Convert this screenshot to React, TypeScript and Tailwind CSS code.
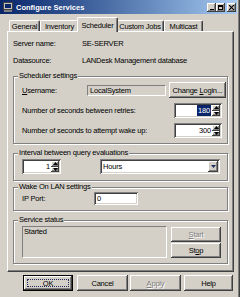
import React from "react";

const raised =
  "bg-[#d4d0c8] shadow-[inset_-1px_-1px_#404040,inset_1px_1px_#ffffff,inset_-2px_-2px_#808080]";
const sunken =
  "shadow-[inset_1px_1px_#808080,inset_-1px_-1px_#ffffff,inset_2px_2px_#404040,inset_-2px_-2px_#d4d0c8]";
const etched = "border border-[#808080] shadow-[inset_1px_1px_#ffffff,1px_1px_#ffffff]";

function Tab({ label, width, active }: { label: string; width: string; active?: boolean }) {
  if (active) {
    return (
      <div
        className={`relative z-10 -mx-[2px] -mb-[1px] flex h-[15px] items-start justify-center rounded-t-[2px] border-l border-t border-r border-white border-r-[#404040] bg-[#d4d0c8] pt-[2px] shadow-[inset_-1px_0_#808080] ${width}`}
      >
        {label}
      </div>
    );
  }
  return (
    <div
      className={`flex h-[11px] items-center justify-center rounded-t-[2px] border-l border-t border-r border-white border-r-[#404040] shadow-[inset_-1px_0_#808080] ${width}`}
    >
      {label}
    </div>
  );
}

function Group({ title, className, children }: { title: string; className: string; children: React.ReactNode }) {
  return (
    <div className={`w-[215px] pl-[8px] ${etched} ${className}`}>
      <div className="-mt-[6px] ml-[-4px] w-fit bg-[#d4d0c8] px-[1px] leading-[10px]">{title}</div>
      {children}
    </div>
  );
}

function Arrow({ down }: { down?: boolean }) {
  return (
    <svg width="5" height="3" viewBox="0 0 5 3">
      <path d={down ? "M0 0h5L2.5 3z" : "M0 3h5L2.5 0z"} fill="#000" />
    </svg>
  );
}

function Spin({ value, width, selected }: { value: string; width: string; selected?: boolean }) {
  return (
    <div className={`flex h-[15px] bg-white p-[2px] ${sunken} ${width}`}>
      <div className="flex flex-1 items-center justify-end pr-[1px]">
        <span className={selected ? "bg-[#0a246a] px-[1px] text-white" : ""}>{value}</span>
      </div>
      <div className="flex w-[8px] flex-col">
        <div className={`flex flex-1 items-center justify-center ${raised}`}>
          <Arrow />
        </div>
        <div className={`flex flex-1 items-center justify-center ${raised}`}>
          <Arrow down />
        </div>
      </div>
    </div>
  );
}

function Button({
  children,
  className,
  disabled,
}: {
  children: React.ReactNode;
  className: string;
  disabled?: boolean;
}) {
  return (
    <div
      className={`flex items-center justify-center ${raised} ${
        disabled ? "text-[#808080] [text-shadow:1px_1px_#ffffff]" : ""
      } ${className}`}
    >
      <span>{children}</span>
    </div>
  );
}

function WinButton({ children, className }: { children: React.ReactNode; className?: string }) {
  return (
    <div className={`flex h-[9px] w-[9px] items-center justify-center ${raised} ${className ?? ""}`}>
      {children}
    </div>
  );
}

export default function App() {
  return (
    <div className="h-[297px] w-[240px] overflow-hidden bg-[#d4d0c8] font-['Liberation_Sans',Arial,sans-serif] text-[7.5px] leading-[11px] tracking-[-0.2px] text-black shadow-[inset_-1px_0_#404040,inset_-2px_0_#808080]">
      {/* title bar */}
      <div className="flex h-[14px] w-[237px] items-center bg-linear-to-r from-[#0a246a] to-[#a6caf0] pl-[3px] pr-[1px]">
        <svg width="10" height="10" viewBox="0 0 10 10">
          <rect x="0.5" y="0.5" width="9" height="7" fill="#c0c0c0" stroke="#404040" />
          <rect x="2" y="2" width="6" height="4" fill="#0a246a" />
          <rect x="1" y="8" width="8" height="2" fill="#808080" />
        </svg>
        <span className="ml-[3px] text-[7.5px] font-bold tracking-normal text-white">Configure Services</span>
        <div className="ml-auto flex items-center">
          <WinButton>
            <div className="mt-[4px] h-[1px] w-[4px] bg-black" />
          </WinButton>
          <WinButton>
            <div className="h-[5px] w-[5px] border border-t-2 border-black" />
          </WinButton>
          <WinButton className="ml-[2px]">
            <svg width="5" height="5" viewBox="0 0 5 5">
              <path d="M0 0L5 5M5 0L0 5" stroke="#000" strokeWidth="1.2" />
            </svg>
          </WinButton>
        </div>
      </div>

      {/* tabs */}
      <div className="flex h-[17px] items-end pl-[9px]">
        <Tab label="General" width="w-[31px]" />
        <Tab label="Inventory" width="w-[39px]" />
        <Tab label="Scheduler" width="w-[41px]" active />
        <Tab label="Custom Jobs" width="w-[48px]" />
        <Tab label="Multicast" width="w-[39px]" />
      </div>

      {/* panel */}
      <div className="ml-[7px] h-[241px] w-[227px] border border-b-[#404040] border-l-white border-r-[#404040] border-t-white pl-[5px] pt-[6px] shadow-[inset_-1px_-1px_#808080]">
        <div className="flex h-[11px] items-center">
          <span className="w-[69px]">Server name:</span>
          <span>SE-SERVER</span>
        </div>
        <div className="mt-[6px] flex h-[11px] items-center">
          <span className="w-[69px]">Datasource:</span>
          <span>LANDesk Management database</span>
        </div>

        <Group title="Scheduler settings" className="mt-[10px] h-[68px]">
          <div className="mt-[1px] flex h-[16px] items-center">
            <span className="w-[65px]">
              <u>U</u>sername:
            </span>
            <div className="flex h-[11px] w-[79px] items-center border border-b-white border-l-[#808080] border-r-white border-t-[#808080] pl-[2px]">
              LocalSystem
            </div>
            <Button className="ml-[3px] h-[16px] w-[57px]">
              Change <u>L</u>ogin...
            </Button>
          </div>
          <div className="mt-[5px] flex h-[15px] items-center">
            <span>Number of seconds between retries:</span>
            <div className="ml-auto mr-[5px]">
              <Spin value="180" width="w-[48px]" selected />
            </div>
          </div>
          <div className="mt-[5px] flex h-[15px] items-center">
            <span>Number of seconds to attempt wake up:</span>
            <div className="ml-auto mr-[5px]">
              <Spin value="300" width="w-[48px]" />
            </div>
          </div>
        </Group>

        <Group title="Interval between query evaluations" className="mt-[9px] h-[28px]">
          <div className="mt-[1px] flex h-[15px] items-center">
            <Spin value="1" width="w-[39px]" />
            <div className={`ml-[39px] flex h-[15px] w-[120px] bg-white p-[2px] ${sunken}`}>
              <div className="flex flex-1 items-center pl-[1px]">Hours</div>
              <div className={`flex w-[10px] items-center justify-center ${raised}`}>
                <svg width="5" height="3" viewBox="0 0 5 3">
                  <path d="M0 0h5L2.5 3z" fill="#1c2a5c" />
                </svg>
              </div>
            </div>
          </div>
        </Group>

        <Group title="Wake On LAN settings" className="mt-[6px] h-[24px]">
          <div className="flex h-[13px] items-center">
            <span className="w-[72px]">IP Port:</span>
            <div className={`flex h-[13px] w-[44px] items-center bg-white pl-[3px] ${sunken}`}>0</div>
          </div>
        </Group>

        <Group title="Service status" className="mt-[9px] h-[44px]">
          <div className="mt-[1px] flex">
            <div className="h-[32px] w-[145px] border border-b-white border-l-[#808080] border-r-white border-t-[#808080] pl-[1px] leading-[10px]">
              Started
            </div>
            <div className="ml-[4px] flex flex-col gap-[1px] pt-[1px]">
              <Button className="h-[15px] w-[50px]" disabled>
                <u>S</u>tart
              </Button>
              <Button className="h-[15px] w-[50px]">
                St<u>o</u>p
              </Button>
            </div>
          </div>
        </Group>
      </div>

      {/* dialog buttons */}
      <div className="mt-[3px] flex pl-[23px]">
        <div className="h-[16px] w-[50px] border border-black">
          <div className={`flex h-full w-full p-[3px] ${raised}`}>
            <div className="flex flex-1 items-center justify-center border border-dotted border-[#1c2a5c]">OK</div>
          </div>
        </div>
        <Button className="ml-[4px] h-[16px] w-[51px]">Cancel</Button>
        <Button className="ml-[2px] h-[16px] w-[51px]" disabled>
          <u>A</u>pply
        </Button>
        <Button className="ml-[3px] h-[16px] w-[49px]">Help</Button>
      </div>
    </div>
  );
}
